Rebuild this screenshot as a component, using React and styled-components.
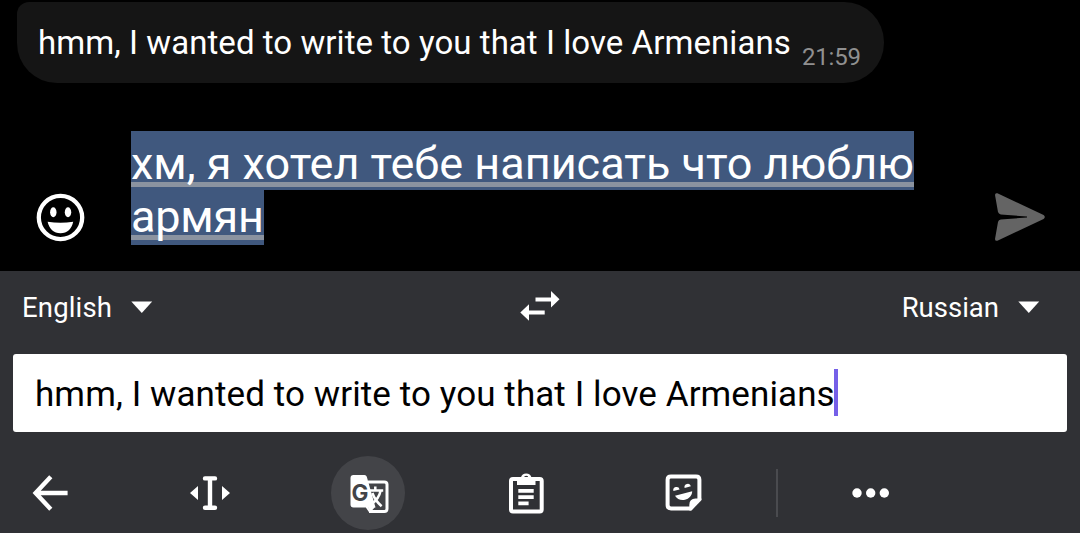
import styled, { createGlobalStyle } from "styled-components"

const App = () => {
    return <Screen>
        <GlobalStyle />
        <Chat>
            <Bubble>
                <Message>hmm, I wanted to write to you that I love Armenians</Message>
                <Time>21:59</Time>
            </Bubble>
            <Composer>
                <SmileIcon />
                <Draft>
                    <Selected $height={59} $line={66} $underline={51}>хм, я хотел тебе написать что люблю</Selected>
                    <Selected $height={55} $line={53} $underline={45} $spacing="-.2px">армян</Selected>
                </Draft>
                <SendIcon />
            </Composer>
        </Chat>
        <Keyboard>
            <Languages>
                <Language $spacing=".16px">English<Caret /></Language>
                <SwapIcon />
                <Language $spacing="0">Russian<Caret /></Language>
            </Languages>
            <SourceField>
                <SourceText>hmm, I wanted to write to you that I love Armenians</SourceText>
                <Cursor />
            </SourceField>
            <Toolbar>
                <Tool><BackIcon /></Tool>
                <Tool><TextCursorIcon /></Tool>
                <Tool $active><TranslateIcon /></Tool>
                <Tool><ClipboardIcon /></Tool>
                <Tool><StickerIcon /></Tool>
                <Divider />
                <Tool><MoreIcon /></Tool>
            </Toolbar>
        </Keyboard>
    </Screen>
}

const SmileIcon = () => <Smile viewBox="0 0 50 50">
    <circle cx="25.5" cy="25.5" r="21.7" fill="none" stroke="#fff" strokeWidth="4.3" />
    <ellipse cx="18.3" cy="20.3" rx="3.2" ry="5" />
    <ellipse cx="33" cy="20.3" rx="3.2" ry="5" />
    <path d="M12.6 29.8 Q25.5 31.8 38.2 29.8 C36.8 37 32.2 41.2 25.5 41.2 C18.8 41.2 14.2 37 12.6 29.8Z" />
</Smile>

const SendIcon = () => <Send viewBox="0 0 52 50">
    <path d="M2.4 1.3 L48.6 23 Q51 25 48.6 27 L2.4 48.7 Q-.2 49.4 .1 46.6 L3 30 Q3.6 28 5.8 27.6 L32 25.4 L32 24.6 L5.8 22.4 Q3.6 22 3 20 L.1 3.4 Q-.2 .6 2.4 1.3Z" />
</Send>

const SwapIcon = () => <Swap viewBox="0 0 40 32">
    <path d="M15.5 6.5H31V0L39.5 8.3L31 16.6V10.5H15.5Z" />
    <path d="M24.7 19.5H9V13.2L.3 21.5L9 29.8V23.5H24.7Z" />
</Swap>

const Caret = () => <CaretSvg viewBox="0 0 22 12">
    <path d="M.3 .6H21.2L10.8 12Z" />
</CaretSvg>

const BackIcon = () => <Icon viewBox="0 0 40 40">
    <path d="M20.8 3.8L5.6 20L20.8 36.2M6 20H37.6" fill="none" stroke="#fff" strokeWidth="4.4" />
</Icon>

const TextCursorIcon = () => <Icon viewBox="0 0 40 40">
    <path d="M15 5.4H25M15 34.7H25M20 5.4V34.7" fill="none" stroke="#fff" strokeWidth="4.4" strokeLinecap="round" />
    <path d="M8 13V27L0 20ZM32 13V27L40 20Z" />
</Icon>

const TranslateIcon = () => <Icon viewBox="0 0 40 40">
    <path d="M20 8.9H36.3Q39 8.9 39 11.6V35.7Q39 38.4 36.3 38.4H21" fill="none" stroke="#fff" strokeWidth="3" />
    <path d="M5.5 2H16.5Q18.2 2 18.8 3.8L27.5 34.5H20.8L21.6 39.9L17.8 34.5H5.5Q2.5 34.5 2.5 31.5V5Q2.5 2 5.5 2Z" />
    <path d="M20.6 33.8H27.3L21.6 39.9Z" />
    <G x="3.6" y="28">G</G>
    <path d="M20.5 17.5H35.2M27.3 13.4V17.5M32.6 17.8C31.4 23.5 28.4 27.6 24 30.6M24.4 20C26 25 29 29.2 33.6 33.2" fill="none" stroke="#fff" strokeWidth="2.5" />
</Icon>

const ClipboardIcon = () => <Icon viewBox="0 0 40 40">
    <rect x="5" y="6" width="30.7" height="32.6" rx="2" fill="none" stroke="#fff" strokeWidth="4" />
    <path fillRule="evenodd" d="M11 4.5H14.9A5.5 5.5 0 0 1 25.5 4.5H29.5V12H11ZM18 5A2.2 2.2 0 1 0 22.4 5A2.2 2.2 0 1 0 18 5Z" />
    <path d="M12.3 16H27.7V19.7H12.3ZM12.3 22.2H27.7V25.9H12.3ZM12.3 28.5H22.6V32.2H12.3Z" />
</Icon>

const StickerIcon = () => <Icon viewBox="0 0 40 40">
    <path d="M28.2 35.4H8Q4.6 35.4 4.6 32V6.8Q4.6 3.4 8 3.4H33Q36.4 3.4 36.4 6.8V27" fill="none" stroke="#fff" strokeWidth="4" />
    <path d="M26.3 37.4V32Q26.3 25.5 32.5 25.5H38.4V27.2L28.6 37.4Z" />
    <path d="M10.4 18A3.2 3.2 0 1 1 16.6 16.4ZM21.6 14.9A3.2 3.2 0 1 1 27.9 13.3ZM12 22.8L29.2 18.3C29.2 22.6 26 25.9 22 26.8C17.9 27.7 14 26.2 12 22.8Z" />
</Icon>

const MoreIcon = () => <Icon viewBox="0 0 40 40">
    <circle cx="7" cy="20" r="4.7" />
    <circle cx="20.7" cy="20" r="4.7" />
    <circle cx="34.3" cy="20" r="4.7" />
</Icon>

const GlobalStyle = createGlobalStyle`
* { box-sizing: border-box; }

body {
margin: 0;
background: #000;
overflow: hidden;
}
`

const Screen = styled.div`
width: 1080px;
height: 533px;
display: flex;
flex-direction: column;

color: #fff;
font-family: Roboto, sans-serif;
white-space: nowrap;
`

const Chat = styled.div`
height: 271px;
padding: 2px 0 0 17px;
background: #000;
`

const Bubble = styled.div`
display: flex;
width: 867px;
height: 81px;
padding-left: 21px;
border-radius: 12px 40px 40px 40px;
background: #151515;
`

const Message = styled.div`
width: 764px;
line-height: 82px;
font-size: 33px;
letter-spacing: .06px;
`

const Time = styled.div`
line-height: 111px;
font-size: 24px;
letter-spacing: -.2px;
color: #909090;
`

const Composer = styled.div`
display: flex;
margin-top: 48px;
padding-left: 18px;
`

const Smile = styled.svg`
width: 50px;
height: 50px;
margin-top: 61px;
fill: #fff;
`

const Draft = styled.div`
display: flex;
flex-direction: column;
align-items: flex-start;
width: 783px;
margin: 0 81px 0 46px;
`

const Selected = styled.span`
height: ${({ $height }) => $height}px;
line-height: ${({ $line }) => $line}px;
font-size: 45px;
letter-spacing: ${({ $spacing }) => $spacing || "normal"};
background: linear-gradient(#8b93a0, #8b93a0) 0 ${({ $underline }) => $underline}px / 100% 5px no-repeat #40587e;
`

const Send = styled.svg`
width: 52px;
height: 50px;
margin-top: 61px;
fill: #646464;
`

const Keyboard = styled.div`
height: 262px;
background: #303135;
`

const Languages = styled.div`
display: grid;
grid-template-columns: 498px 1fr auto;
height: 83px;
padding: 0 40px 0 22px;
`

const Language = styled.div`
display: flex;
gap: 19px;
line-height: 74px;
font-size: 27.5px;
letter-spacing: ${({ $spacing }) => $spacing};
`

const CaretSvg = styled.svg`
width: 22px;
height: 12px;
margin-top: 30px;
fill: #fff;
`

const Swap = styled.svg`
width: 40px;
height: 32px;
margin-top: 20px;
fill: #fff;
`

const SourceField = styled.div`
display: flex;
height: 78px;
margin: 0 13px;
padding-left: 22px;
border-radius: 3px;
background: #fff;
color: #000;
`

const SourceText = styled.div`
width: 799px;
line-height: 82px;
font-size: 35px;
letter-spacing: .09px;
`

const Cursor = styled.div`
width: 4px;
height: 47px;
margin-top: 15px;
background: #7560e8;
`

const Toolbar = styled.div`
display: grid;
grid-template-columns: 160px 158px 158px 157px 130px 57px 74px;
padding: 24px 0 0 13px;
`

const Tool = styled.div`
display: flex;
justify-content: center;
align-items: center;
width: 74px;
height: 74px;
border-radius: 50%;
background: ${({ $active }) => $active ? "#434448" : "none"};
`

const Icon = styled.svg`
width: 40px;
height: 40px;
fill: #fff;
overflow: visible;
`

const G = styled.text`
fill: #434448;
font-family: Inter, sans-serif;
font-size: 22.5px;
font-weight: 700;
`

const Divider = styled.div`
width: 2px;
height: 48px;
margin-top: 13px;
background: #4a4b4f;
`

export default App
